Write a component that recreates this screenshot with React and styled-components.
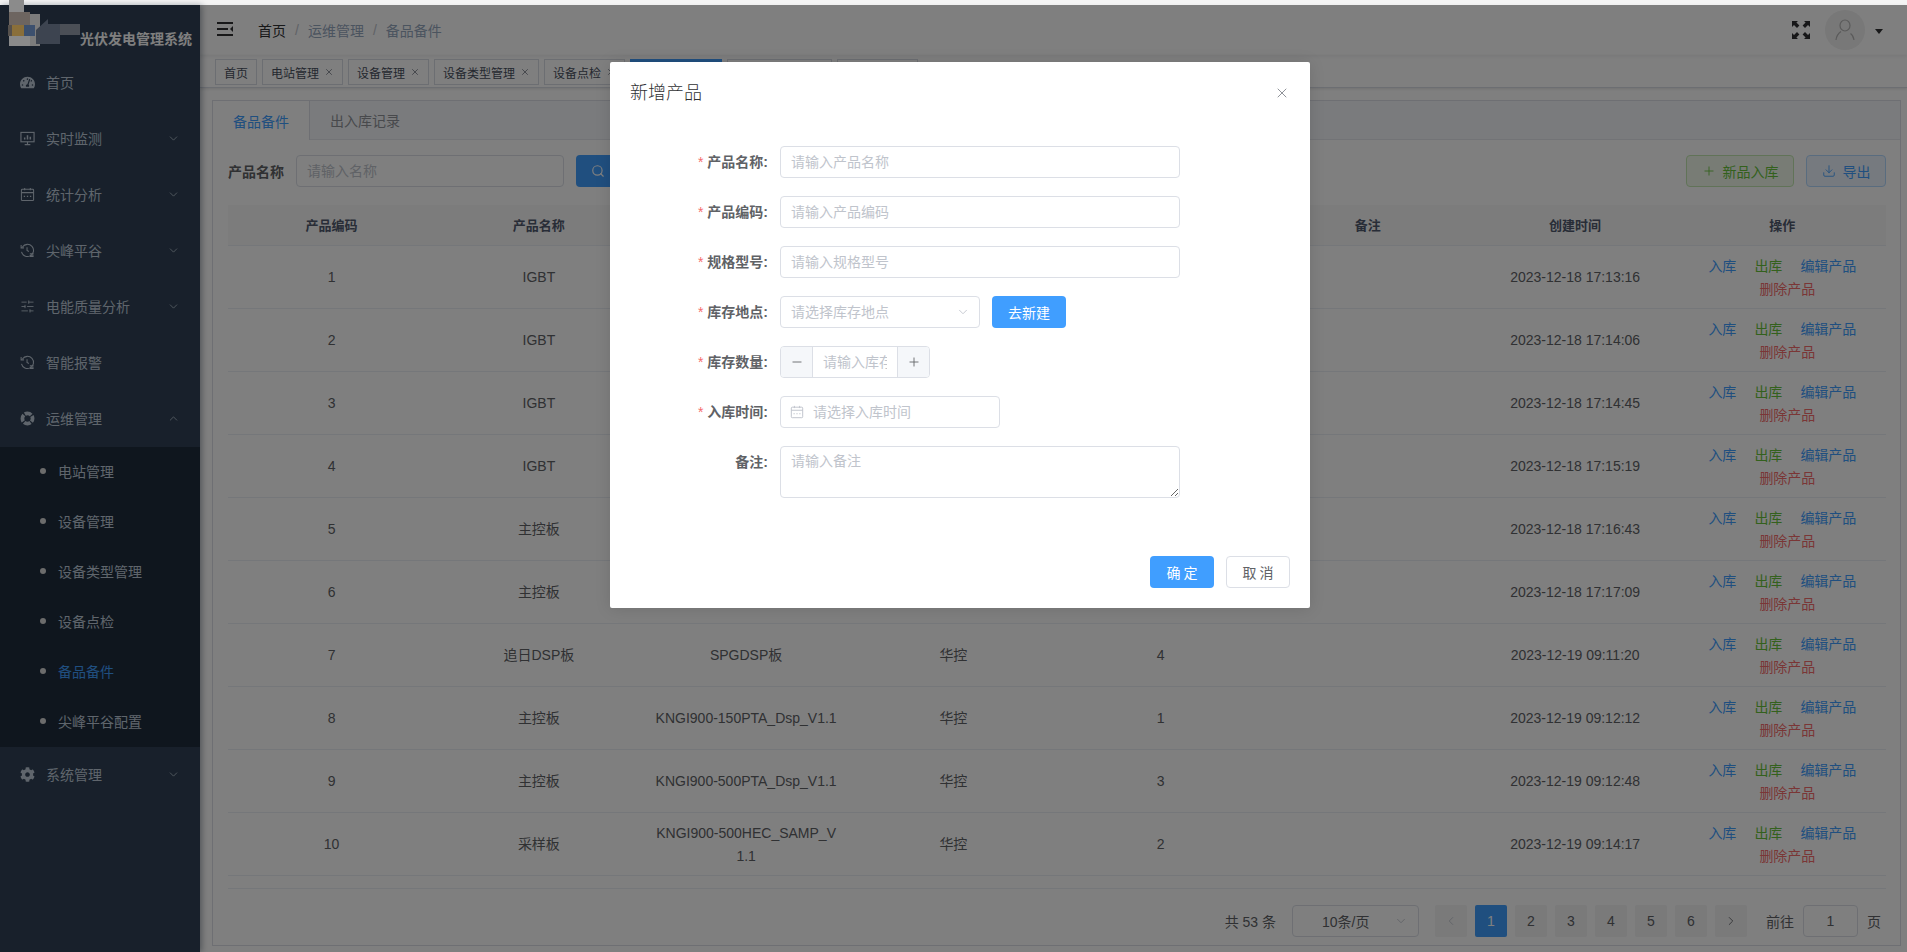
import React from "react";
import styled, { createGlobalStyle } from "styled-components";
import {
  ChevronDown,
  ChevronUp,
  ChevronLeft,
  ChevronRight,
  SlidersHorizontal,
  Search,
  Plus,
  Minus,
  X,
  Download,
} from "lucide-react";
import { FaTachometerAlt, FaCog } from "react-icons/fa";

const GlobalStyle = createGlobalStyle`
  html, body {
    margin: 0;
    padding: 0;
    height: 100%;
    overflow: hidden;
    background: #f4f4f4;
    font-family: "Liberation Sans", "Noto Sans CJK SC", sans-serif;
    font-size: 14px;
    color: #606266;
  }
  * {
    box-sizing: border-box;
  }
  input, textarea {
    font-family: inherit;
  }
  input::placeholder, textarea::placeholder {
    color: #c0c4cc;
    opacity: 1;
  }
`;

const Page = styled.div`
  position: relative;
  width: 1907px;
  height: 952px;
  padding-top: 5px;
  overflow: hidden;
`;

const Shell = styled.div`
  display: flex;
  height: 947px;
  background: #fff;
`;

const Sidebar = styled.aside`
  position: relative;
  z-index: 2;
  flex: 0 0 200px;
  background: #304156;
  box-shadow: 2px 0 6px rgba(0, 21, 41, 0.35);
`;

const Brand = styled.div`
  height: 50px;
  display: flex;
  align-items: center;
  justify-content: flex-end;
  padding: 15px 8px 0 0;
  color: #fff;
  font-size: 14px;
  font-weight: 700;
`;

const LogoMosaic = styled.svg`
  position: absolute;
  left: 0;
  top: 0;
  z-index: 7;
`;

const MenuRow = styled.div`
  height: 56px;
  display: flex;
  align-items: center;
  padding: 0 0 2px 20px;
  color: #bfcbd9;
  svg.lead {
    width: 15px;
    height: 15px;
    flex: 0 0 15px;
  }
`;

const MenuLabel = styled.span`
  margin-left: 11px;
  flex: 1;
`;

const Arrow = styled.span`
  display: flex;
  margin-right: 20px;
  svg {
    width: 13px;
    height: 13px;
    stroke-width: 1.4;
  }
`;

const SubMenu = styled.div`
  background: #1f2d3d;
  height: 300px;
`;

const SubRow = styled.div`
  height: 50px;
  display: flex;
  align-items: center;
  padding: 0 0 2px 40px;
  color: ${({ $active }) => ($active ? "#409eff" : "#bfcbd9")};
`;

const SubDot = styled.i`
  width: 6px;
  height: 6px;
  border-radius: 50%;
  background: #d8d8d8;
  margin-right: 12px;
`;

const Main = styled.main`
  flex: 1;
  min-width: 0;
  display: flex;
  flex-direction: column;
`;

const Navbar = styled.header`
  height: 50px;
  display: flex;
  align-items: center;
  padding-left: 17px;
  box-shadow: 0 1px 4px rgba(0, 21, 41, 0.08);
`;

const Hamburger = styled.svg`
  margin-top: -2px;
`;

const Crumbs = styled.nav`
  display: flex;
  align-items: center;
  margin-left: 25px;
  flex: 1;
  color: #97a8be;
`;

const CrumbHome = styled.span`
  color: #303133;
`;

const CrumbSep = styled.span`
  margin: 0 9px;
  color: #c0c4cc;
`;

const Avatar = styled.div`
  width: 40px;
  height: 40px;
  border-radius: 50%;
  margin-left: 15px;
  background: #f0f0f0;
  display: flex;
  align-items: center;
  justify-content: center;
`;

const Caret = styled.i`
  width: 0;
  height: 0;
  margin: 2px 24px 0 10px;
  border-left: 4px solid transparent;
  border-right: 4px solid transparent;
  border-top: 5px solid #303133;
`;

const TagsBar = styled.div`
  height: 33px;
  display: flex;
  gap: 5px;
  padding: 4px 0 0 15px;
  border-bottom: 1px solid #d8dce5;
  box-shadow: 0 1px 3px rgba(0, 0, 0, 0.12);
`;

const Tag = styled.span`
  height: 26px;
  display: flex;
  align-items: center;
  padding: 0 8px;
  font-size: 12px;
  border: 1px solid ${({ $active }) => ($active ? "#409eff" : "#d8dce5")};
  background: ${({ $active }) => ($active ? "#409eff" : "#fff")};
  color: ${({ $active }) => ($active ? "#fff" : "#495060")};
  svg {
    width: 10px;
    height: 10px;
    margin-left: 5px;
    stroke-width: 1.5;
  }
  ${({ $active }) =>
    $active &&
    `&::before {
      content: "";
      width: 8px;
      height: 8px;
      margin-right: 3px;
      border-radius: 50%;
      background: #fff;
    }`}
`;

const Content = styled.div`
  flex: 1;
  min-height: 0;
  padding: 12px 6px 6px 12px;
`;

const Card = styled.section`
  height: 100%;
  border: 1px solid #dcdfe6;
  display: flex;
  flex-direction: column;
`;

const TabHead = styled.div`
  height: 39px;
  flex: none;
  display: flex;
  background: #f5f7fa;
  border-bottom: 1px solid #e4e7ed;
`;

const Tab = styled.div`
  display: flex;
  align-items: center;
  padding: 0 20px;
  height: ${({ $active }) => ($active ? "39px" : "38px")};
  width: ${({ $active }) => ($active ? "97px" : "auto")};
  color: ${({ $active }) => ($active ? "#409eff" : "#909399")};
  background: ${({ $active }) => ($active ? "#fff" : "transparent")};
  border-right: ${({ $active }) => ($active ? "1px solid #dcdfe6" : "none")};
`;

const TabBody = styled.div`
  flex: 1;
  min-height: 0;
  padding: 15px 14px 0 15px;
  display: flex;
  flex-direction: column;
`;

const FilterBar = styled.div`
  height: 32px;
  display: flex;
  align-items: center;
  margin-bottom: 18px;
`;

const FilterLabel = styled.label`
  font-weight: 700;
  margin-right: 12px;
`;

const TextField = styled.input`
  height: 32px;
  width: ${({ $w }) => $w || "100%"};
  flex: none;
  border: 1px solid #dcdfe6;
  border-radius: 4px;
  padding: 0 10px;
  font-size: 14px;
  background: #fff;
  outline: none;
`;

const FilterSearch = styled.button`
  width: 92px;
  height: 32px;
  margin-left: 12px;
  border: none;
  border-radius: 4px;
  background: #409eff;
  color: #fff;
  display: flex;
  align-items: center;
  padding-left: 15px;
  svg {
    width: 14px;
    height: 14px;
  }
`;

const Spacer = styled.div`
  flex: 1;
`;

const PlainBtn = styled.button`
  height: 32px;
  width: ${({ $w }) => $w};
  margin-left: ${({ $ml }) => $ml || "0"};
  border-radius: 4px;
  border: 1px solid ${({ $tone }) => ($tone === "green" ? "#c2e7b0" : "#b3d8ff")};
  background: ${({ $tone }) => ($tone === "green" ? "#f0f9eb" : "#ecf5ff")};
  color: ${({ $tone }) => ($tone === "green" ? "#67c23a" : "#409eff")};
  font-family: inherit;
  font-size: 14px;
  display: flex;
  align-items: center;
  justify-content: center;
  gap: 7px;
  padding: 0;
  svg {
    width: 14px;
    height: 14px;
    stroke-width: 1.5;
  }
`;

const Table = styled.table`
  width: 100%;
  table-layout: fixed;
  border-collapse: collapse;
  flex: none;
`;

const Th = styled.th`
  height: 40px;
  background: #f8f8f9;
  color: #515a6e;
  font-weight: 700;
  font-size: 13px;
  border-bottom: 1px solid #ebeef5;
  padding: 0 10px;
`;

const Td = styled.td`
  height: 63px;
  padding: 2px 10px 0;
  text-align: center;
  line-height: 23px;
  word-break: break-all;
  border-bottom: 1px solid #ebeef5;
`;

const Ops = styled.div`
  display: flex;
  flex-wrap: wrap;
  justify-content: center;
  column-gap: 18px;
`;

const OpLink = styled.span`
  color: ${({ $tone }) =>
    ({ blue: "#409eff", green: "#67c23a", red: "#f56c6c" }[$tone])};
`;

const OpDelete = styled(OpLink)`
  flex: 0 0 100%;
  text-align: center;
  padding-left: 10px;
`;

const TableEnd = styled.div`
  height: 13px;
  flex: none;
  border-bottom: 1px solid #ebeef5;
`;

const Pager = styled.div`
  display: flex;
  align-items: center;
  justify-content: flex-end;
  margin-top: 16px;
  padding-right: 5px;
  color: #606266;
`;

const PagerSelect = styled.div`
  width: 127px;
  height: 32px;
  margin: 0 16px;
  border: 1px solid #dcdfe6;
  border-radius: 4px;
  display: flex;
  align-items: center;
  justify-content: space-between;
  padding: 0 10px 0 29px;
  svg {
    width: 14px;
    height: 14px;
    color: #c0c4cc;
    stroke-width: 1.5;
  }
`;

const PageBtn = styled.span`
  width: 32px;
  height: 32px;
  margin-right: 8px;
  border-radius: 2px;
  display: flex;
  align-items: center;
  justify-content: center;
  font-size: 14px;
  background: ${({ $active }) => ($active ? "#409eff" : "#f4f4f5")};
  color: ${({ $active, $muted }) =>
    $active ? "#fff" : $muted ? "#c0c4cc" : "#606266"};
  svg {
    width: 14px;
    height: 14px;
    stroke-width: 1.5;
  }
`;

const PagerInput = styled.div`
  width: 55px;
  height: 32px;
  margin: 0 9px;
  border: 1px solid #dcdfe6;
  border-radius: 4px;
  display: flex;
  align-items: center;
  justify-content: center;
`;

const GoLabel = styled.span`
  margin-left: 11px;
`;

const Mask = styled.div`
  position: absolute;
  left: 0;
  right: 0;
  top: 5px;
  bottom: 0;
  z-index: 5;
  background: rgba(0, 0, 0, 0.5);
`;

const Dialog = styled.div`
  position: absolute;
  z-index: 6;
  left: 610px;
  top: 62px;
  width: 700px;
  background: #fff;
  border-radius: 2px;
  box-shadow: 0 1px 16px rgba(0, 0, 0, 0.12);
`;

const DialogHead = styled.div`
  height: 54px;
  padding: 19px 20px 0;
  display: flex;
  justify-content: space-between;
`;

const DialogTitle = styled.h2`
  margin: 0;
  font-size: 18px;
  font-weight: 300;
  line-height: 24px;
  color: #303133;
`;

const CloseIcon = styled(X)`
  width: 16px;
  height: 16px;
  margin: 4px 0 0;
  color: #909399;
`;

const DialogBody = styled.div`
  padding: 30px 20px;
`;

const FormRow = styled.div`
  display: flex;
  align-items: flex-start;
  margin-bottom: 18px;
`;

const FormLabel = styled.label`
  width: 138px;
  margin-right: 12px;
  flex: none;
  text-align: right;
  line-height: 32px;
  font-weight: 700;
  color: #606266;
`;

const Star = styled.span`
  color: #f56c6c;
  font-weight: 400;
  margin-right: 4px;
`;

const SelectBox = styled.div`
  width: 200px;
  height: 32px;
  position: relative;
  svg {
    position: absolute;
    right: 10px;
    top: 9px;
    width: 14px;
    height: 14px;
    color: #c0c4cc;
    stroke-width: 1.5;
  }
`;

const PrimaryBtn = styled.button`
  width: ${({ $w }) => $w};
  height: 32px;
  margin-left: ${({ $ml }) => $ml || "0"};
  border: none;
  border-radius: 4px;
  background: #409eff;
  color: #fff;
  font-family: inherit;
  font-size: 14px;
  letter-spacing: ${({ $spaced }) => ($spaced ? "3px" : "0")};
  padding: ${({ $spaced }) => ($spaced ? "0 0 0 3px" : "0")};
`;

const GhostBtn = styled(PrimaryBtn)`
  background: #fff;
  border: 1px solid #dcdfe6;
  color: #606266;
`;

const Stepper = styled.div`
  width: 150px;
  height: 32px;
  display: flex;
  border: 1px solid #dcdfe6;
  border-radius: 4px;
  overflow: hidden;
`;

const StepBtn = styled.span`
  flex: 0 0 32px;
  background: #f5f7fa;
  display: flex;
  align-items: center;
  justify-content: center;
  color: #606266;
  border-${({ $side }) => $side}: 1px solid #dcdfe6;
  svg {
    width: 14px;
    height: 14px;
    stroke-width: 1.5;
  }
`;

const StepInput = styled.input`
  flex: 1;
  min-width: 0;
  border: none;
  outline: none;
  padding: 0 10px;
  font-size: 14px;
`;

const DateBox = styled.div`
  position: relative;
  width: 220px;
  height: 32px;
  svg {
    position: absolute;
    left: 10px;
    top: 9px;
    width: 14px;
    height: 14px;
    color: #c0c4cc;
  }
`;

const DateField = styled(TextField)`
  padding-left: 32px;
`;

const NoteField = styled.textarea`
  width: 400px;
  height: 52px;
  flex: none;
  padding: 4px 10px;
  border: 1px solid #dcdfe6;
  border-radius: 4px;
  font-size: 14px;
  line-height: 21px;
  outline: none;
  resize: vertical;
`;

const DialogFoot = styled.div`
  padding: 10px 20px 20px;
  display: flex;
  justify-content: flex-end;
`;

const MonitorIcon = () => (
  <svg className="lead" viewBox="0 0 16 16" fill="none" stroke="currentColor" strokeWidth="1.2">
    <rect x="1" y="1.5" width="14" height="10" />
    <path d="M5 14.5h6M8 11.5v3" />
    <path d="M5 9V7M8 9V4.5M11 9V6" strokeWidth="1.6" />
  </svg>
);

const CalendarIcon = ({ className }) => (
  <svg className={className} viewBox="0 0 16 16" fill="none" stroke="currentColor" strokeWidth="1.1">
    <rect x="1.5" y="2.5" width="13" height="12" rx="1" />
    <path d="M1.5 6h13M5 1v2.5M11 1v2.5" />
    <path d="M4 10h1.4M7.3 10h1.4M10.6 10h1.4" strokeWidth="1.4" />
  </svg>
);

const ClockIcon = () => (
  <svg className="lead" viewBox="0 0 16 16" fill="none" stroke="currentColor" strokeWidth="1.1">
    <path d="M2.6 4.2A6.5 6.5 0 1 1 1.6 9.5" />
    <path d="M1.2 2.2v3h3" />
    <path d="M7.5 4.5V8l2 1" />
    <path d="M10.5 11.5h4M10.5 13h4M10.5 14.5h4" />
  </svg>
);

const RingIcon = () => (
  <svg className="lead" viewBox="0 0 16 16" fill="none" stroke="currentColor">
    <circle cx="8" cy="8" r="5.4" strokeWidth="4" strokeDasharray="7.2 1.28" strokeDashoffset="3.6" />
  </svg>
);

const menuTop = [
  { label: "首页", icon: <FaTachometerAlt className="lead" /> },
  { label: "实时监测", icon: <MonitorIcon />, arrow: true },
  { label: "统计分析", icon: <CalendarIcon className="lead" />, arrow: true },
  { label: "尖峰平谷", icon: <ClockIcon />, arrow: true },
  { label: "电能质量分析", icon: <SlidersHorizontal className="lead" strokeWidth={1.4} />, arrow: true },
  { label: "智能报警", icon: <ClockIcon /> },
];

const subItems = ["电站管理", "设备管理", "设备类型管理", "设备点检", "备品备件", "尖峰平谷配置"];

const tags = [
  { label: "首页", plain: true },
  { label: "电站管理" },
  { label: "设备管理" },
  { label: "设备类型管理" },
  { label: "设备点检" },
  { label: "备品备件", active: true },
  { label: "尖峰平谷配置" },
  { label: "系统管理" },
];

const columns = ["产品编码", "产品名称", "规格型号", "生产厂家", "库存数量", "备注", "创建时间", "操作"];

const rows = [
  [1, "IGBT", "", "", "", "2023-12-18 17:13:16"],
  [2, "IGBT", "", "", "", "2023-12-18 17:14:06"],
  [3, "IGBT", "", "", "", "2023-12-18 17:14:45"],
  [4, "IGBT", "", "", "", "2023-12-18 17:15:19"],
  [5, "主控板", "", "", "", "2023-12-18 17:16:43"],
  [6, "主控板", "", "", "", "2023-12-18 17:17:09"],
  [7, "追日DSP板", "SPGDSP板", "华控", 4, "2023-12-19 09:11:20"],
  [8, "主控板", "KNGI900-150PTA_Dsp_V1.1", "华控", 1, "2023-12-19 09:12:12"],
  [9, "主控板", "KNGI900-500PTA_Dsp_V1.1", "华控", 3, "2023-12-19 09:12:48"],
  [10, "采样板", "KNGI900-500HEC_SAMP_V1.1", "华控", 2, "2023-12-19 09:14:17"],
];

const Required = () => <Star>*</Star>;

export default function App() {
  return (
    <Page>
      <GlobalStyle />
      <Shell>
        <Sidebar>
          <Brand>光伏发电管理系统</Brand>
          {menuTop.map((m) => (
            <MenuRow key={m.label}>
              {m.icon}
              <MenuLabel>{m.label}</MenuLabel>
              {m.arrow && (
                <Arrow>
                  <ChevronDown />
                </Arrow>
              )}
            </MenuRow>
          ))}
          <MenuRow>
            <RingIcon />
            <MenuLabel>运维管理</MenuLabel>
            <Arrow>
              <ChevronUp />
            </Arrow>
          </MenuRow>
          <SubMenu>
            {subItems.map((s) => (
              <SubRow key={s} $active={s === "备品备件"}>
                <SubDot />
                {s}
              </SubRow>
            ))}
          </SubMenu>
          <MenuRow>
            <FaCog className="lead" />
            <MenuLabel>系统管理</MenuLabel>
            <Arrow>
              <ChevronDown />
            </Arrow>
          </MenuRow>
        </Sidebar>
        <Main>
          <Navbar>
            <Hamburger width="16" height="14" viewBox="0 0 16 14" fill="#303133">
              <rect width="16" height="2" />
              <rect y="6" width="11" height="2" />
              <rect y="12" width="16" height="2" />
              <path d="M16 4v6l-3-3z" />
            </Hamburger>
            <Crumbs>
              <CrumbHome>首页</CrumbHome>
              <CrumbSep>/</CrumbSep>
              运维管理
              <CrumbSep>/</CrumbSep>
              备品备件
            </Crumbs>
            <svg width="18" height="18" viewBox="0 0 18 18" fill="#303133">
              <path d="M0 0h6L4.4 1.6l3 3L5 7 2 4 0 6zM18 0v6l-2-2-3 3-2.4-2.4 3-3L12 0zM0 18v-6l2 2 3-3 2.4 2.4-3 3L6 18zM18 18h-6l1.6-1.6-3-3L13 11l3 3 2-2z" />
            </svg>
            <Avatar>
              <svg width="20" height="22" viewBox="0 0 20 22" fill="none" stroke="#b4b4b4" strokeWidth="1.2">
                <ellipse cx="10" cy="6.5" rx="5" ry="5.5" />
                <path d="M1 21c.6-5 3.5-7.5 5-8.5M19 21c-.5-3.5-2-5.5-3.5-6.5" />
              </svg>
            </Avatar>
            <Caret />
          </Navbar>
          <TagsBar>
            {tags.map((t) => (
              <Tag key={t.label} $active={t.active}>
                {t.label}
                {!t.plain && <X />}
              </Tag>
            ))}
          </TagsBar>
          <Content>
            <Card>
              <TabHead>
                <Tab $active>备品备件</Tab>
                <Tab>出入库记录</Tab>
              </TabHead>
              <TabBody>
                <FilterBar>
                  <FilterLabel>产品名称</FilterLabel>
                  <TextField $w="268px" placeholder="请输入名称" />
                  <FilterSearch>
                    <Search />
                  </FilterSearch>
                  <Spacer />
                  <PlainBtn $tone="green" $w="108px">
                    <Plus />
                    新品入库
                  </PlainBtn>
                  <PlainBtn $tone="blue" $w="80px" $ml="12px">
                    <Download />
                    导出
                  </PlainBtn>
                </FilterBar>
                <Table>
                  <thead>
                    <tr>
                      {columns.map((c) => (
                        <Th key={c}>{c}</Th>
                      ))}
                    </tr>
                  </thead>
                  <tbody>
                    {rows.map((r) => (
                      <tr key={r[0]}>
                        <Td>{r[0]}</Td>
                        <Td>{r[1]}</Td>
                        <Td>{r[2]}</Td>
                        <Td>{r[3]}</Td>
                        <Td>{r[4]}</Td>
                        <Td />
                        <Td>{r[5]}</Td>
                        <Td>
                          <Ops>
                            <OpLink $tone="blue">入库</OpLink>
                            <OpLink $tone="green">出库</OpLink>
                            <OpLink $tone="blue">编辑产品</OpLink>
                            <OpDelete $tone="red">删除产品</OpDelete>
                          </Ops>
                        </Td>
                      </tr>
                    ))}
                  </tbody>
                </Table>
                <TableEnd />
                <Pager>
                  共 53 条
                  <PagerSelect>
                    10条/页
                    <ChevronDown />
                  </PagerSelect>
                  <PageBtn $muted>
                    <ChevronLeft />
                  </PageBtn>
                  {[1, 2, 3, 4, 5, 6].map((n) => (
                    <PageBtn key={n} $active={n === 1}>
                      {n}
                    </PageBtn>
                  ))}
                  <PageBtn>
                    <ChevronRight />
                  </PageBtn>
                  <GoLabel>前往</GoLabel>
                  <PagerInput>1</PagerInput>
                  页
                </Pager>
              </TabBody>
            </Card>
          </Content>
        </Main>
      </Shell>
      <Mask />
      <LogoMosaic width="110" height="55" viewBox="0 0 110 55">
        <rect x="9" y="0" width="15" height="12" fill="#8b8b8b" />
        <rect x="9" y="12" width="21" height="13" fill="#6d6560" />
        <rect x="30" y="14" width="10" height="32" fill="#7c7c7c" />
        <rect x="8" y="25" width="4" height="11" fill="#55504c" />
        <rect x="12" y="25" width="12" height="11" fill="#8a6f3a" />
        <rect x="24" y="25" width="11" height="11" fill="#3c506e" />
        <rect x="9" y="36" width="21" height="10" fill="#8a8a8a" />
        <path d="M36 30l12-11v5h12v20H36z" fill="#3d4450" />
        <rect x="60" y="24" width="20" height="11" fill="#4b4f56" />
      </LogoMosaic>
      <Dialog>
        <DialogHead>
          <DialogTitle>新增产品</DialogTitle>
          <CloseIcon strokeWidth={1.5} />
        </DialogHead>
        <DialogBody>
          <FormRow>
            <FormLabel>
              <Required />
              产品名称:
            </FormLabel>
            <TextField $w="400px" placeholder="请输入产品名称" />
          </FormRow>
          <FormRow>
            <FormLabel>
              <Required />
              产品编码:
            </FormLabel>
            <TextField $w="400px" placeholder="请输入产品编码" />
          </FormRow>
          <FormRow>
            <FormLabel>
              <Required />
              规格型号:
            </FormLabel>
            <TextField $w="400px" placeholder="请输入规格型号" />
          </FormRow>
          <FormRow>
            <FormLabel>
              <Required />
              库存地点:
            </FormLabel>
            <SelectBox>
              <TextField placeholder="请选择库存地点" />
              <ChevronDown />
            </SelectBox>
            <PrimaryBtn $w="74px" $ml="12px">
              去新建
            </PrimaryBtn>
          </FormRow>
          <FormRow>
            <FormLabel>
              <Required />
              库存数量:
            </FormLabel>
            <Stepper>
              <StepBtn $side="right">
                <Minus />
              </StepBtn>
              <StepInput placeholder="请输入库存数量" />
              <StepBtn $side="left">
                <Plus />
              </StepBtn>
            </Stepper>
          </FormRow>
          <FormRow>
            <FormLabel>
              <Required />
              入库时间:
            </FormLabel>
            <DateBox>
              <CalendarIcon />
              <DateField placeholder="请选择入库时间" />
            </DateBox>
          </FormRow>
          <FormRow>
            <FormLabel>备注:</FormLabel>
            <NoteField placeholder="请输入备注" />
          </FormRow>
        </DialogBody>
        <DialogFoot>
          <PrimaryBtn $w="64px" $spaced>
            确定
          </PrimaryBtn>
          <GhostBtn $w="64px" $ml="12px" $spaced>
            取消
          </GhostBtn>
        </DialogFoot>
      </Dialog>
    </Page>
  );
}
